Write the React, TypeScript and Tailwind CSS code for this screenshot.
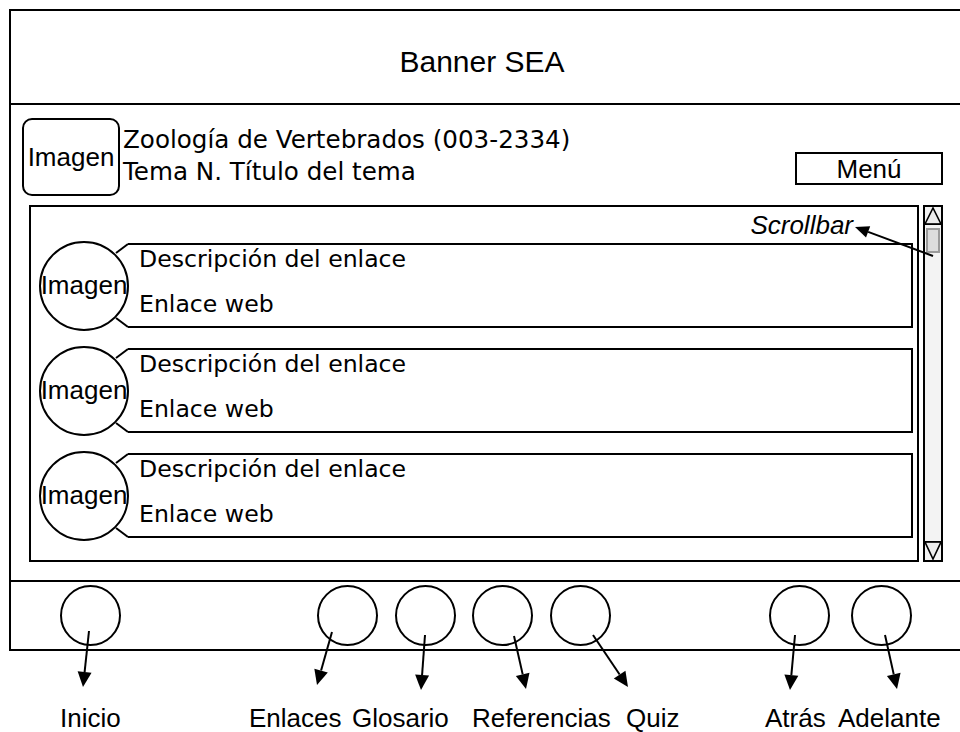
import React from 'react';

const arial = "font-['Liberation_Sans',Arial,sans-serif]";
const verdana = "font-['DejaVu_Sans',Verdana,sans-serif]";

type ArrowProps = { x1: number; y1: number; x2: number; y2: number; head?: number; half?: number };

function Arrow({ x1, y1, x2, y2, head = 15, half = 7 }: ArrowProps) {
  const dx = x2 - x1;
  const dy = y2 - y1;
  const len = Math.hypot(dx, dy);
  const ux = dx / len;
  const uy = dy / len;
  const bx = x2 - ux * head;
  const by = y2 - uy * head;
  const px = -uy;
  const py = ux;
  return (
    <g>
      <line x1={x1} y1={y1} x2={bx} y2={by} stroke="#000" strokeWidth={2} />
      <polygon
        points={`${x2},${y2} ${bx + px * half},${by + py * half} ${bx - px * half},${by - py * half}`}
        fill="#000"
      />
    </g>
  );
}

const arrows: ArrowProps[] = [
  { x1: 933, y1: 256, x2: 855, y2: 227, head: 14, half: 6 },
  { x1: 89, y1: 631, x2: 83, y2: 687 },
  { x1: 332, y1: 632, x2: 317, y2: 685 },
  { x1: 425, y1: 635, x2: 421, y2: 690 },
  { x1: 514, y1: 636, x2: 526, y2: 689 },
  { x1: 593, y1: 635, x2: 628, y2: 687 },
  { x1: 795, y1: 635, x2: 790, y2: 690 },
  { x1: 885, y1: 635, x2: 897, y2: 689 },
];

// circles in the bottom bar: margin before each one
const navGaps = ['ml-[49px]', 'ml-[196px]', 'ml-[17px]', 'ml-[16px]', 'ml-[17px]', 'ml-[158px]', 'ml-[21px]'];

const labels = [
  { text: 'Inicio', w: 'w-[189px]' },
  { text: 'Enlaces', w: 'w-[103px]' },
  { text: 'Glosario', w: 'w-[120px]' },
  { text: 'Referencias', w: 'w-[154px]' },
  { text: 'Quiz', w: 'w-[139px]' },
  { text: 'Atrás', w: 'w-[73px]' },
  { text: 'Adelante', w: 'w-[110px]' },
];

function LinkItem() {
  return (
    <div className="relative h-[85px] ml-[97px] mr-[4px]">
      <div className="h-full border-y-2 border-r-2 border-black pl-[11px]">
        <div className={`${verdana} text-[23.6px] leading-[28px]`}>Descripción del enlace</div>
        <div className={`${verdana} text-[23.6px] leading-[28px] mt-[17px]`}>Enlace web</div>
      </div>
      <svg className="absolute left-[-16px] top-0" width="18" height="85" viewBox="0 0 18 85">
        <line x1="16" y1="1" x2="4" y2="10" stroke="#000" strokeWidth="2" />
        <line x1="16" y1="84" x2="4" y2="75" stroke="#000" strokeWidth="2" />
      </svg>
      <div
        className={`${arial} absolute left-[-89px] top-1/2 -translate-y-1/2 w-[90px] h-[90px] rounded-full border-2 border-black bg-white flex items-center justify-center text-[26px] text-black z-10`}
      >
        Imagen
      </div>
    </div>
  );
}

export default function App() {
  return (
    <div className={`${arial} relative w-[960px] h-[732px] overflow-hidden bg-white text-black`}>
      <div className="ml-[9px] mt-[9px] w-[960px] border-2 border-black">
        {/* banner */}
        <div className="h-[94px] border-b-2 border-black flex justify-center pt-[36px] pr-[14px]">
          <span className="text-[30px] leading-[30px]">Banner SEA</span>
        </div>

        {/* main */}
        <div className="h-[475px] pl-[11px] pt-[13px]">
          <div className="w-[921px]">
            <div className="flex items-start">
              <div className="w-[98px] h-[78px] border-2 border-black rounded-[10px] flex items-center justify-center text-[26px]">
                Imagen
              </div>
              <div className={`${verdana} ml-[3px] mt-[6px] text-[24.6px] leading-[32px]`}>
                <div>Zoología de Vertebrados (003-2334)</div>
                <div>Tema N. Título del tema</div>
              </div>
              <div className="ml-auto mt-[34px] w-[148px] h-[33px] border-2 border-black flex items-center justify-center text-[26px] leading-[26px]">
                Menú
              </div>
            </div>

            <div className="flex mt-[9px] ml-[7px] gap-[4px] h-[357px]">
              <div className="w-[890px] h-full border-2 border-black">
                <div className="h-[36px] flex justify-end pr-[64px] pt-[5px]">
                  <span className="italic text-[26px] leading-[26px]">Scrollbar</span>
                </div>
                <div className="flex flex-col gap-[20px]">
                  <LinkItem />
                  <LinkItem />
                  <LinkItem />
                </div>
              </div>
              <div className="w-[20px] h-full border-2 border-black bg-[#f3f3f3] flex flex-col">
                <svg width="16" height="18" viewBox="0 0 16 18" className="block">
                  <polygon points="0,17 8,1 16,17" fill="#ececec" stroke="#000" strokeWidth="1.6" />
                  <line x1="0" y1="17.5" x2="16" y2="17.5" stroke="#000" strokeWidth="1.5" />
                </svg>
                <div className="mt-[3px] mx-[1px] h-[25px] border-2 border-[#9a9a9a] bg-[#dcdcdc]" />
                <div className="flex-1" />
                <svg width="16" height="19" viewBox="0 0 16 19" className="block">
                  <polygon points="0,1 8,18 16,1" fill="#ececec" stroke="#000" strokeWidth="1.6" />
                  <line x1="0" y1="0.5" x2="16" y2="0.5" stroke="#000" strokeWidth="1.5" />
                </svg>
              </div>
            </div>
          </div>
        </div>

        {/* bottom navigation */}
        <div className="h-[69px] border-t-2 border-black flex items-center">
          {navGaps.map((g, i) => (
            <div key={i} className={`${g} w-[61px] h-[61px] rounded-full border-2 border-black`} />
          ))}
        </div>
      </div>

      <div className="flex mt-[52px] ml-[60px]">
        {labels.map(l => (
          <div key={l.text} className={`${l.w} shrink-0 text-[26px] leading-[30px] whitespace-nowrap`}>
            {l.text}
          </div>
        ))}
      </div>

      <svg className="absolute inset-0 pointer-events-none" width="960" height="732" viewBox="0 0 960 732">
        {arrows.map((a, i) => (
          <Arrow key={i} {...a} />
        ))}
      </svg>
    </div>
  );
}
